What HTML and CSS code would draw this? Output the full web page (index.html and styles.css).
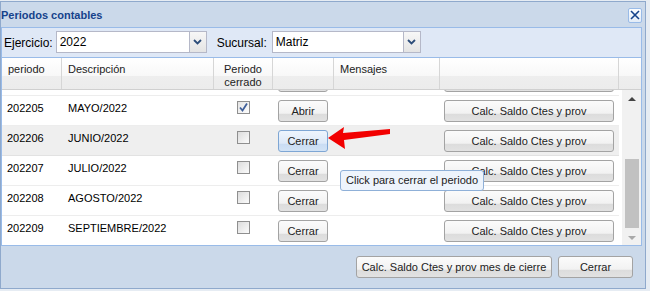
FILE: index.html
```html
<!DOCTYPE html>
<html lang="es">
<head>
<meta charset="utf-8">
<title>Periodos contables</title>
<link rel="stylesheet" href="styles.css">
</head>
<body>
<div class="win">
  <div class="head">
    <span class="title">Periodos contables</span>
    <span class="close"><svg width="10" height="10" viewBox="0 0 10 10"><path d="M1 1L9 9M9 1L1 9" stroke="#15428b" stroke-width="1.6" fill="none"/></svg></span>
  </div>
  <div class="panel">
    <div class="tbar">
      <span class="lbl">Ejercicio:</span>
      <div class="combo c1"><span class="val">2022</span><span class="trig"><svg width="9" height="6" viewBox="0 0 9 6"><path d="M1 1L4.5 4.5L8 1" stroke="#2c4d7a" stroke-width="1.8" fill="none"/></svg></span></div>
      <span class="lbl l2">Sucursal:</span>
      <div class="combo c2"><span class="val">Matriz</span><span class="trig"><svg width="9" height="6" viewBox="0 0 9 6"><path d="M1 1L4.5 4.5L8 1" stroke="#2c4d7a" stroke-width="1.8" fill="none"/></svg></span></div>
    </div>
    <div class="grid">
      <div class="ghead">
        <div class="hc w1">periodo</div>
        <div class="hc w2">Descripción</div>
        <div class="hc w3 center">Periodo<br>cerrado</div>
        <div class="hc w4"></div>
        <div class="hc w5">Mensajes</div>
        <div class="hc w6"></div>
        <div class="hc w7"></div>
      </div>
      <div class="gbody">
        <div class="viewport">
          <div class="rows">
            <div class="row">
              <div class="c w1"></div><div class="c w2"></div>
              <div class="c w3 center"></div>
              <div class="c w4"><span class="btn b-small"></span></div>
              <div class="c w5"></div>
              <div class="c w6"><span class="btn b-calc"></span></div>
            </div>
            <div class="row">
              <div class="c w1">202205</div><div class="c w2">MAYO/2022</div>
              <div class="c w3 center"><span class="chk on"><svg width="11" height="11" viewBox="0 0 11 11"><path d="M2 5.5L4.5 8.5L9 1.5" stroke="#3f5f9a" stroke-width="1.8" fill="none"/></svg></span></div>
              <div class="c w4"><span class="btn b-small">Abrir</span></div>
              <div class="c w5"></div>
              <div class="c w6"><span class="btn b-calc">Calc. Saldo Ctes y prov</span></div>
            </div>
            <div class="row hover">
              <div class="c w1">202206</div><div class="c w2">JUNIO/2022</div>
              <div class="c w3 center"><span class="chk"></span></div>
              <div class="c w4"><span class="btn b-small over">Cerrar</span></div>
              <div class="c w5"></div>
              <div class="c w6"><span class="btn b-calc">Calc. Saldo Ctes y prov</span></div>
            </div>
            <div class="row">
              <div class="c w1">202207</div><div class="c w2">JULIO/2022</div>
              <div class="c w3 center"><span class="chk"></span></div>
              <div class="c w4"><span class="btn b-small">Cerrar</span></div>
              <div class="c w5"></div>
              <div class="c w6"><span class="btn b-calc">Calc. Saldo Ctes y prov</span></div>
            </div>
            <div class="row">
              <div class="c w1">202208</div><div class="c w2">AGOSTO/2022</div>
              <div class="c w3 center"><span class="chk"></span></div>
              <div class="c w4"><span class="btn b-small">Cerrar</span></div>
              <div class="c w5"></div>
              <div class="c w6"><span class="btn b-calc">Calc. Saldo Ctes y prov</span></div>
            </div>
            <div class="row">
              <div class="c w1">202209</div><div class="c w2">SEPTIEMBRE/2022</div>
              <div class="c w3 center"><span class="chk"></span></div>
              <div class="c w4"><span class="btn b-small">Cerrar</span></div>
              <div class="c w5"></div>
              <div class="c w6"><span class="btn b-calc">Calc. Saldo Ctes y prov</span></div>
            </div>
          </div>
        </div>
        <div class="vscroll">
          <div class="track">
            <span class="up"></span>
            <span class="thumb"></span>
            <span class="down"></span>
          </div>
        </div>
      </div>
    </div>
  </div>
  <div class="foot">
    <span class="btn b-big">Calc. Saldo Ctes y prov mes de cierre</span>
    <span class="btn b-close">Cerrar</span>
  </div>
  <svg class="arrow" width="70" height="26" viewBox="0 0 70 26">
    <path d="M1 12 L17 1 L16 7 L63 3 L63 8 L17 14 L18 23 Z" fill="#f20000"/>
  </svg>
  <div class="tip">Click para cerrar el periodo</div>
</div>
</body>
</html>
```
FILE: styles.css
```css
html, body {
  margin: 0;
  padding: 0;
}
body {
  background: #e6ecf3;
  padding-top: 1px;
  font-family: "Liberation Sans", Arial, sans-serif;
  font-size: 11px;
  color: #000;
}
.win {
  position: relative;
  width: 644px;
  height: 286px;
  border: 1px solid #8fa9cc;
  background: #cbd9ea;
}
.head {
  height: 25px;
  display: flex;
  align-items: center;
  justify-content: space-between;
  padding-right: 3px;
}
.title {
  font-weight: bold;
  font-size: 11px;
  color: #15428b;
  padding-left: 0;
}
.close {
  width: 12px;
  height: 13px;
  border: 1px solid #99bbe8;
  border-radius: 2px;
  background: linear-gradient(#fbfdff, #e3ecf7);
  display: flex;
  align-items: center;
  justify-content: center;
  margin-top: 1px;
}
.panel {
  width: 639px;
  border: 1px solid #99bbe8;
  background: #fff;
}
.tbar {
  height: 29px;
  background: #dfe8f6;
  border-bottom: 1px solid #99bbe8;
  display: flex;
  align-items: flex-start;
  padding-left: 2px;
}
.lbl {
  font-size: 12px;
  line-height: 14px;
  margin-top: 8px;
  color: #000;
}
.l2 {
  margin-left: 10px;
}
.combo {
  display: flex;
  margin-top: 3px;
  height: 22px;
}
.c1 { margin-left: 3px; }
.c2 { margin-left: 5px; }
.val {
  box-sizing: border-box;
  height: 22px;
  border: 1px solid #b5b8c8;
  border-right: none;
  background: #fff;
  font-size: 12px;
  line-height: 20px;
  padding-left: 3px;
}
.c1 .val { width: 133px; }
.c2 .val { width: 131px; }
.trig {
  box-sizing: border-box;
  width: 18px;
  height: 22px;
  border: 1px solid #b5b8c8;
  background: linear-gradient(#f7f7f7, #e4e4e4);
  display: flex;
  align-items: center;
  justify-content: center;
}
.grid {
  background: #fff;
}
.ghead {
  display: flex;
  height: 31px;
  border-bottom: 1px solid #d0d0d0;
  background: linear-gradient(#ffffff 0%, #f8f8f8 57%, #eeeeee 59%, #ececec 100%);
}
.hc {
  box-sizing: border-box;
  border-right: 1px solid #d6d6d6;
  padding: 5px 0 0 6px;
  line-height: 13px;
  color: #222;
}
.hc.w7 { border-right: none; }
.hc.center { padding-left: 0; text-align: center; }
.w1 { width: 60px; }
.w2 { width: 152px; }
.w3 { width: 59px; }
.w4 { width: 61px; }
.w5 { width: 106px; }
.w6 { width: 179px; }
.w7 { width: 22px; }
.gbody {
  display: flex;
  height: 155px;
}
.viewport {
  width: 617px;
  height: 155px;
  overflow: hidden;
}
.rows {
  margin-top: -24px;
}
.row {
  display: flex;
  box-sizing: border-box;
  height: 30px;
  border-bottom: 1px solid #ededed;
}
.row.hover {
  background: #efefef;
  border-bottom-color: #e2e2e2;
}
.c {
  box-sizing: border-box;
  padding: 5px 0 0 6px;
  line-height: 14px;
  white-space: nowrap;
}
.c.w1 { padding-left: 5px; }
.c.center { padding-left: 0; display: flex; justify-content: center; }
.chk {
  box-sizing: border-box;
  width: 13px;
  height: 13px;
  border: 1px solid #8f8f8f;
  background: linear-gradient(135deg, #dcdcdc, #fbfbfb);
  display: flex;
  align-items: center;
  justify-content: center;
}
.chk.on {
  background: linear-gradient(135deg, #e4e4e4, #fdfdfd);
}
.c.w4, .c.w6 {
  padding: 4px 0 0 5px;
}
.c.w6 { padding-left: 4px; }
.btn {
  box-sizing: border-box;
  display: flex;
  align-items: center;
  justify-content: center;
  height: 22px;
  border: 1px solid #a3a3a3;
  border-radius: 3px;
  background: linear-gradient(#fbfbfb 0%, #f2f2f2 62%, #dcdcdc 64%, #e2e2e2 100%);
  color: #222;
  font-size: 11px;
  white-space: nowrap;
}
.btn.over {
  border-color: #7ea6d4;
  background: linear-gradient(#eef5fd 0%, #dde9f8 62%, #c9dcf3 64%, #d2e3f6 100%);
}
.b-small { width: 50px; }
.b-calc { width: 170px; }
.vscroll {
  width: 22px;
  height: 155px;
}
.track {
  margin-left: 3px;
  width: 19px;
  height: 155px;
  background: #f1f1f1;
  display: flex;
  flex-direction: column;
  align-items: center;
}
.up {
  margin-top: 7px;
  width: 0;
  height: 0;
  border-left: 4px solid transparent;
  border-right: 4px solid transparent;
  border-bottom: 4px solid #444;
}
.thumb {
  margin-top: 58px;
  width: 14px;
  height: 69px;
  background: #c1c1c1;
}
.down {
  margin-top: 8px;
  width: 0;
  height: 0;
  border-left: 4px solid transparent;
  border-right: 4px solid transparent;
  border-top: 4px solid #a8a8a8;
}
.foot {
  display: flex;
  justify-content: flex-end;
  gap: 6px;
  padding: 10px 12px 0 0;
}
.b-big { width: 196px; }
.b-close { width: 75px; }
.arrow {
  position: absolute;
  left: 326px;
  top: 124px;
}
.tip {
  position: absolute;
  left: 339px;
  top: 168px;
  box-sizing: border-box;
  width: 144px;
  height: 21px;
  border: 1px solid #8fb0d8;
  border-radius: 3px;
  background: #eef4fc;
  color: #222;
  font-size: 11px;
  line-height: 19px;
  padding-left: 5px;
  white-space: nowrap;
}
```
